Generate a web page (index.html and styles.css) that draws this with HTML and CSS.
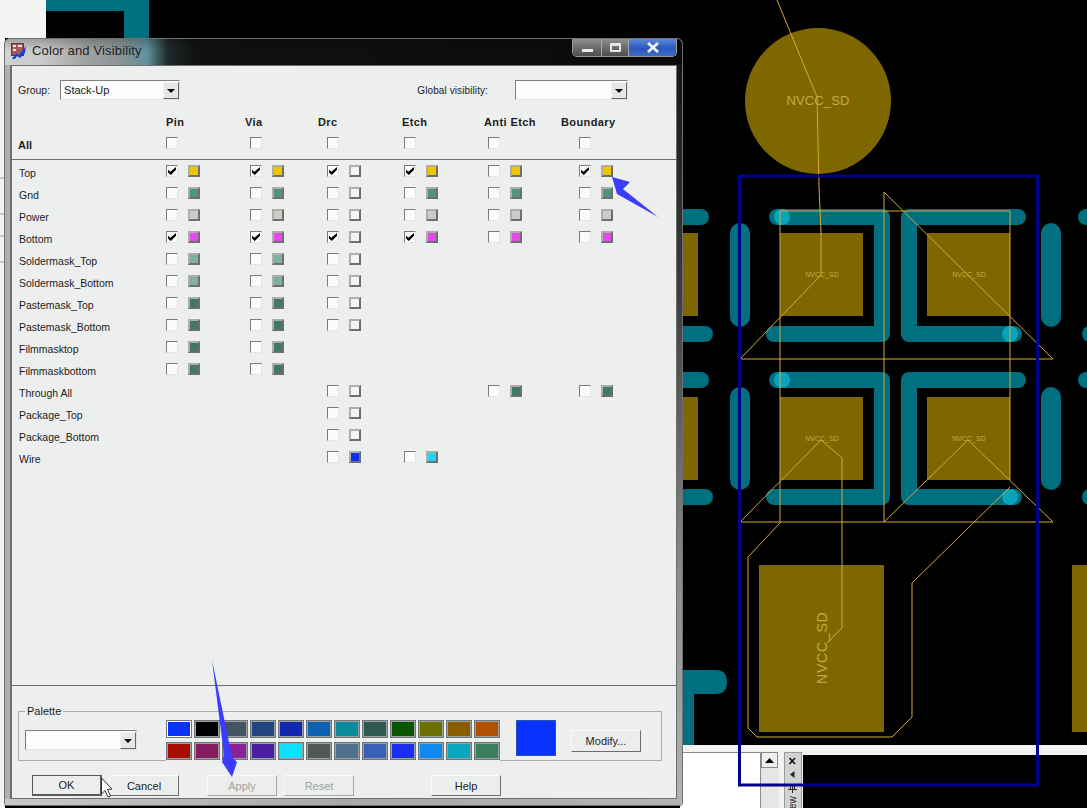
FILE: index.html
```html
<!DOCTYPE html>
<html lang="en">

<head>
    <title>Color and Visibility</title>
    <link rel="stylesheet" href="styles.css">
</head>

<body>
    <!-- layout editor behind the dialog -->
    <svg class="board" width="1087" height="808" viewBox="0 0 1087 808">
        <rect x="0" y="0" width="46" height="38" fill="#f4f4f4" />
        <rect x="0" y="38" width="5" height="770" fill="#f4f4f4" />
        <path d="M0,178 H5 M0,214 H5 M0,236 H5 M0,262 H5" stroke="#a0a0a0" />
        <path class="corner" d="M46,0 H149 V38 H124 V11 H46 Z" />

        <circle class="pad" cx="818" cy="101" r="73" />

        <g class="pad">
            <rect x="680" y="233" width="18" height="83" />
            <rect x="680" y="397" width="18" height="83" />
            <rect x="780" y="233" width="83" height="83" />
            <rect x="927" y="233" width="83" height="83" />
            <rect x="780" y="397" width="83" height="83" />
            <rect x="927" y="397" width="83" height="83" />
            <rect x="759" y="565" width="125" height="167" />
            <rect x="1072" y="565" width="15" height="167" />
        </g>

        <g class="trace">
            <path d="M777,217 H882 V334 H774" />
            <path d="M1018,217 H909 V334 H1014" />
            <path d="M777,380 H882 V497 H774" />
            <path d="M1018,380 H909 V497 H1014" />
            <path d="M680,217 H701" />
            <path d="M680,334 H705" />
            <path d="M680,380 H701" />
            <path d="M680,497 H705" />
            <path d="M1086,217 H1095" />
            <path d="M1090,334 H1095" />
            <path d="M1086,380 H1095" />
            <path d="M1090,497 H1095" />
        </g>
        <g class="pill">
            <rect x="730" y="223" width="20" height="104" rx="10" />
            <rect x="730" y="387" width="20" height="103" rx="10" />
            <rect x="1041" y="223" width="20" height="104" rx="10" />
            <rect x="1041" y="387" width="20" height="103" rx="10" />
        </g>
        <path class="corner" d="M680,745 V670 H716 Q727,670 727,682 Q727,694 716,694 H694 V745 Z" />

        <g class="via">
            <circle cx="782" cy="217" r="8" />
            <circle cx="1010" cy="334" r="8" />
            <circle cx="782" cy="380" r="8" />
            <circle cx="1010" cy="497" r="8" />
        </g>

        <g class="wire">
            <path d="M777,0 L817,97 L819,187 L821,232 V275 L740,359 H1053 L884,192 V522" />
            <path d="M780,523 V211 H1010 V480" />
            <path d="M740,522 H1053 L968,440 L884,522" />
            <path d="M740,522 L821,440 L842,458 V628 L827,643" />
            <path d="M1010,487 L912,583 V717 L892,737 H757 L748,728 V557 L780,523" />
        </g>

        <g class="pin-label">
            <text class="label-big" x="818" y="105" text-anchor="middle">NVCC_SD</text>
            <text class="label-small" x="822" y="277" text-anchor="middle">NVCC_SD</text>
            <text class="label-small" x="969" y="277" text-anchor="middle">NVCC_SD</text>
            <text class="label-small" x="822" y="441" text-anchor="middle">NVCC_SD</text>
            <text class="label-small" x="969" y="441" text-anchor="middle">NVCC_SD</text>
            <text class="label-rot" transform="translate(827,684) rotate(-90)">NVCC_SD</text>
        </g>

        <!-- docked panels along the bottom -->
        <rect x="680" y="745" width="407" height="63" fill="#f2f2f2" />
        <rect x="680" y="752" width="80" height="56" fill="#ffffff" />
        <path d="M680,752.5 H760.5 V808" fill="none" stroke="#8a8a8a" />
        <rect class="hatch" x="761" y="768" width="18" height="40" />
        <rect x="761.500" y="752.500" width="16" height="15" fill="#efefef" stroke="#8a8a8a" />
        <path d="M765,763 L769.500,758 L774,763 Z" fill="#000" />
        <rect x="784.500" y="752.500" width="17" height="56" fill="#d2d4d4" stroke="#9a9a9a" />
        <path d="M789.500,758 L795,764 M795,758 L789.500,764" stroke="#111" stroke-width="1.600" />
        <path d="M794.500,771 L790,774.500 L794.500,778 Z" fill="#222" />
        <path d="M788,789.500 H797 M792.500,786 V793 M790.500,786 V789 M794.500,786 V789" stroke="#222" fill="none" />
        <text class="dock-label" transform="translate(796,809) rotate(-90)">ew</text>
        <rect x="803" y="755" width="284" height="53" fill="#000" />

        <rect class="select-box" x="739.500" y="176" width="298" height="609" />
    </svg>

    <div class="dialog">
        <div class="titlebar">
            <svg class="app-icon" width="16" height="16" viewBox="0 0 16 16">
                <rect x="0.500" y="0.500" width="12" height="12" fill="#a85a5a" stroke="#6a3030" />
                <path d="M2,2 H5 V4 H2 Z M7,2 H11 V4 H7 Z M2,6 H5 V8 H2 Z" fill="#efe6e0" />
                <path d="M1,16 L5,10 L8,12 L15,3 L14,10 L9,15 L6,13 L4,16 Z" fill="#1c3fd8" />
            </svg>
            <span class="title-text">Color and Visibility</span>
            <div class="caption-btns">
                <span class="cap-btn cap-min"><i></i></span>
                <span class="cap-btn cap-max"><i></i></span>
                <span class="cap-btn cap-close">
                    <svg width="14" height="11" viewBox="0 0 14 11">
                        <path d="M2,1 L12,10 M12,1 L2,10" stroke="#eef2f8" stroke-width="2.800" />
                    </svg>
                </span>
            </div>
        </div>

        <div class="client">
            <div class="top-row">
                <div class="field">
                    <span class="field-label">Group:</span>
                    <div class="combo combo-group"><span>Stack-Up</span><b class="drop"></b></div>
                </div>
                <div class="field">
                    <span class="field-label">Global visibility:</span>
                    <div class="combo combo-global"><span></span><b class="drop"></b></div>
                </div>
            </div>

            <div class="grid heads">
                <span></span>
                <span>Pin</span><span>Via</span><span>Drc</span><span>Etch</span><span>Anti Etch</span><span>Boundary</span>
            </div>
            <div class="grid all-row">
                <span class="all-label">All</span>
                <span class="chk"></span><span class="chk"></span><span class="chk"></span><span class="chk"></span><span class="chk"></span><span class="chk"></span>
            </div>

            <div class="layers">
                <div class="grid row">
                    <span class="name">Top</span>
                    <div class="cell"><span class="chk on"></span><span class="sw yellow"></span></div>
                    <div class="cell"><span class="chk on"></span><span class="sw yellow"></span></div>
                    <div class="cell"><span class="chk on"></span><span class="sw white"></span></div>
                    <div class="cell"><span class="chk on"></span><span class="sw yellow"></span></div>
                    <div class="cell"><span class="chk"></span><span class="sw yellow"></span></div>
                    <div class="cell"><span class="chk on"></span><span class="sw yellow"></span></div>
                </div>
                <div class="grid row">
                    <span class="name">Gnd</span>
                    <div class="cell"><span class="chk"></span><span class="sw green"></span></div>
                    <div class="cell"><span class="chk"></span><span class="sw green"></span></div>
                    <div class="cell"><span class="chk"></span><span class="sw white"></span></div>
                    <div class="cell"><span class="chk"></span><span class="sw green"></span></div>
                    <div class="cell"><span class="chk"></span><span class="sw green"></span></div>
                    <div class="cell"><span class="chk"></span><span class="sw green"></span></div>
                </div>
                <div class="grid row">
                    <span class="name">Power</span>
                    <div class="cell"><span class="chk"></span><span class="sw silver"></span></div>
                    <div class="cell"><span class="chk"></span><span class="sw silver"></span></div>
                    <div class="cell"><span class="chk"></span><span class="sw white"></span></div>
                    <div class="cell"><span class="chk"></span><span class="sw silver"></span></div>
                    <div class="cell"><span class="chk"></span><span class="sw silver"></span></div>
                    <div class="cell"><span class="chk"></span><span class="sw silver"></span></div>
                </div>
                <div class="grid row">
                    <span class="name">Bottom</span>
                    <div class="cell"><span class="chk on"></span><span class="sw pink"></span></div>
                    <div class="cell"><span class="chk on"></span><span class="sw pink"></span></div>
                    <div class="cell"><span class="chk on"></span><span class="sw white"></span></div>
                    <div class="cell"><span class="chk on"></span><span class="sw pink"></span></div>
                    <div class="cell"><span class="chk"></span><span class="sw pink"></span></div>
                    <div class="cell"><span class="chk"></span><span class="sw pink"></span></div>
                </div>
                <div class="grid row">
                    <span class="name">Soldermask_Top</span>
                    <div class="cell"><span class="chk"></span><span class="sw sage"></span></div>
                    <div class="cell"><span class="chk"></span><span class="sw sage"></span></div>
                    <div class="cell"><span class="chk"></span><span class="sw white"></span></div>
                </div>
                <div class="grid row">
                    <span class="name">Soldermask_Bottom</span>
                    <div class="cell"><span class="chk"></span><span class="sw sage"></span></div>
                    <div class="cell"><span class="chk"></span><span class="sw sage"></span></div>
                    <div class="cell"><span class="chk"></span><span class="sw white"></span></div>
                </div>
                <div class="grid row">
                    <span class="name">Pastemask_Top</span>
                    <div class="cell"><span class="chk"></span><span class="sw pine"></span></div>
                    <div class="cell"><span class="chk"></span><span class="sw pine"></span></div>
                    <div class="cell"><span class="chk"></span><span class="sw white"></span></div>
                </div>
                <div class="grid row">
                    <span class="name">Pastemask_Bottom</span>
                    <div class="cell"><span class="chk"></span><span class="sw pine"></span></div>
                    <div class="cell"><span class="chk"></span><span class="sw pine"></span></div>
                    <div class="cell"><span class="chk"></span><span class="sw white"></span></div>
                </div>
                <div class="grid row">
                    <span class="name">Filmmasktop</span>
                    <div class="cell"><span class="chk"></span><span class="sw pine"></span></div>
                    <div class="cell"><span class="chk"></span><span class="sw pine"></span></div>
                </div>
                <div class="grid row">
                    <span class="name">Filmmaskbottom</span>
                    <div class="cell"><span class="chk"></span><span class="sw pine"></span></div>
                    <div class="cell"><span class="chk"></span><span class="sw pine"></span></div>
                </div>
                <div class="grid row">
                    <span class="name">Through All</span>
                    <div></div>
                    <div></div>
                    <div class="cell"><span class="chk"></span><span class="sw white"></span></div>
                    <div></div>
                    <div class="cell"><span class="chk"></span><span class="sw pine"></span></div>
                    <div class="cell"><span class="chk"></span><span class="sw pine"></span></div>
                </div>
                <div class="grid row">
                    <span class="name">Package_Top</span>
                    <div></div>
                    <div></div>
                    <div class="cell"><span class="chk"></span><span class="sw white"></span></div>
                </div>
                <div class="grid row">
                    <span class="name">Package_Bottom</span>
                    <div></div>
                    <div></div>
                    <div class="cell"><span class="chk"></span><span class="sw white"></span></div>
                </div>
                <div class="grid row">
                    <span class="name">Wire</span>
                    <div></div>
                    <div></div>
                    <div class="cell"><span class="chk"></span><span class="sw blue"></span></div>
                    <div class="cell"><span class="chk"></span><span class="sw cyan"></span></div>
                </div>
            </div>

            <div class="footer">
                <fieldset class="palette">
                    <legend>Palette</legend>
                    <div class="combo combo-palette"><span></span><b class="drop"></b></div>
                    <div class="colors">
                        <span class="color sel c1"></span><span class="color c2"></span><span class="color c3"></span><span class="color c4"></span><span class="color c5"></span><span class="color c6"></span><span class="color c7"></span><span class="color c8"></span><span class="color c9"></span><span class="color c10"></span><span class="color c11"></span><span class="color c12"></span>
                        <span class="color c13"></span><span class="color c14"></span><span class="color c15"></span><span class="color c16"></span><span class="color c17"></span><span class="color c18"></span><span class="color c19"></span><span class="color c20"></span><span class="color c21"></span><span class="color c22"></span><span class="color c23"></span><span class="color c24"></span>
                    </div>
                    <div class="current"></div>
                    <button class="btn btn-modify">Modify...</button>
                </fieldset>
                <div class="actions">
                    <button class="btn btn-default">OK</button>
                    <button class="btn">Cancel</button>
                    <button class="btn btn-off btn-apply">Apply</button>
                    <button class="btn btn-off">Reset</button>
                    <button class="btn btn-help">Help</button>
                </div>
            </div>
        </div>
    </div>

    <!-- annotations and pointer on top of everything -->
    <svg class="overlay" width="1087" height="808" viewBox="0 0 1087 808">
        <path class="arrow" d="M612,177 L630,182 L623,189 L658,217 L617,194 Z" />
        <path class="arrow" d="M212,660 L232,757 L237,762 L232,777 L222,762 L224,755 Z" />
        <path d="M101.500,778 V794 L105,790.500 L108,797 L110.500,796 L107.500,789.500 L112,789 Z" fill="#fff" stroke="#333" />
    </svg>
</body>

</html>
```

FILE: styles.css
```css
body {
    margin: 0;
    width: 1087px;
    height: 808px;
    overflow: hidden;
    background-color: #000;
    font-family: "Liberation Sans", Arial, sans-serif;
    font-size: 11px;
    color: #1c1c1c;
}

/* board */
.board,
.overlay {
    position: absolute;
    left: 0;
    top: 0;
}

.overlay {
    pointer-events: none;
}

.pad {
    fill: #7f6700;
}

.trace {
    fill: none;
    stroke: #006f80;
    stroke-width: 16;
    stroke-linecap: round;
    stroke-linejoin: round;
}

.pill,
.corner {
    fill: #006f80;
}

.via {
    fill: #08a4bb;
}

.wire {
    fill: none;
    stroke: #d4aa3a;
    stroke-width: 1;
}

.pin-label {
    fill: #c4aa40;
    font-family: "Liberation Sans", Arial, sans-serif;
}

.label-big {
    font-size: 13px;
    letter-spacing: 0.1px;
}

.label-rot {
    font-size: 14px;
    letter-spacing: 0.8px;
}

.label-small {
    font-size: 7px;
}

.dock-label {
    font-size: 10px;
    fill: #222;
}

.hatch {
    fill: #e6e6e6;
}

.select-box {
    fill: none;
    stroke: #00008b;
    stroke-width: 3;
}

.arrow {
    fill: #3a3cff;
}

/* dialog frame */
.dialog {
    position: absolute;
    left: 4px;
    top: 38px;
    width: 679px;
    height: 768px;
    box-sizing: border-box;
    padding: 0 5px 6px 5px;
    display: flex;
    flex-direction: column;
    border: 1px solid #707070;
    border-radius: 6px 6px 3px 3px;
    background-color: #aeb0b0;
}

.dialog::after {
    content: "";
    position: absolute;
    right: 0;
    top: 26px;
    bottom: 0;
    width: 5px;
    background: linear-gradient(180deg, #161616 0, #3a3d3d 30%, #8a8e8e 70%, #b2b4b4 100%);
}

.dialog::before {
    content: "";
    position: absolute;
    left: 0;
    right: 0;
    bottom: 0;
    height: 6px;
    background: linear-gradient(90deg, #c8c8c8, #a8a8a8 50%, #b4b4b4);
}

.titlebar {
    box-sizing: border-box;
    flex: none;
    height: 26px;
    margin: 0 -5px;
    padding: 0 6px 3px;
    display: flex;
    align-items: center;
    border-radius: 5px 5px 0 0;
    background:
        linear-gradient(180deg, rgba(0, 0, 0, 0.22), rgba(0, 0, 0, 0) 45%),
        linear-gradient(90deg, #d2d4d4 0, #c6c8c8 6%, #a0a2a2 12%, #8c9496 17%, #5f929c 21%, #1f2a2c 24%, #111 28%, #0a0a0a 100%);
}

.app-icon {
    margin-right: 5px;
}

.title-text {
    font-size: 13px;
    letter-spacing: 0.15px;
    color: #222;
}

.caption-btns {
    margin-left: auto;
    align-self: flex-start;
    margin-right: -1px;
    display: flex;
    height: 17px;
    border: 1px solid #9a9a9a;
    border-top: none;
    border-radius: 0 0 5px 5px;
    overflow: hidden;
}

.cap-btn {
    display: flex;
    align-items: center;
    justify-content: center;
    height: 17px;
    border-left: 1px solid #a8a8a8;
    background: linear-gradient(180deg, #8e9092, #6a6c6e 50%, #4c4e50);
}

.cap-min {
    width: 28px;
    border-left: none;
}

.cap-min i {
    width: 11px;
    height: 3px;
    margin-top: 6px;
    background-color: #ececec;
}

.cap-max {
    width: 26px;
}

.cap-max i {
    width: 7px;
    height: 4px;
    border: 2px solid #e6e6e6;
    border-top-width: 3px;
}

.cap-close {
    width: 47px;
    background: linear-gradient(180deg, #5f8ad8, #2a58bc 55%, #3e6cc8);
}

/* client area */
.client {
    flex: 1;
    min-height: 0;
    display: flex;
    flex-direction: column;
    border: 1px solid #6e6e6e;
    border-left-width: 2px;
    background-color: #edefee;
}

.top-row {
    box-sizing: border-box;
    flex: none;
    height: 36px;
    padding: 14px 0 0 6px;
    display: flex;
    justify-content: space-between;
}

.field {
    display: flex;
    align-items: center;
    height: 20px;
}

.field + .field {
    margin-right: 48px;
}

.field-label {
    font-size: 10.500px;
    margin-right: 10px;
}

.field + .field .field-label {
    margin-right: 27px;
    font-size: 10px;
    letter-spacing: 0.1px;
}

.combo {
    box-sizing: border-box;
    height: 20px;
    display: flex;
    align-items: center;
    justify-content: space-between;
    padding-left: 3px;
    border: 1px solid;
    border-color: #7e7e7e #e2e2e2 #e2e2e2 #7e7e7e;
    background-color: #fbfcfc;
}

.combo span {
    font-size: 11px;
}

.combo-group {
    width: 120px;
}

.combo-global {
    width: 113px;
}

.combo-palette {
    width: 112px;
}

.drop {
    position: relative;
    width: 16px;
    height: 17px;
    box-sizing: border-box;
    border: 1px solid;
    border-color: #f4f4f4 #666 #666 #f4f4f4;
    background-color: #e6e8e7;
}

.drop::after {
    content: "";
    position: absolute;
    left: 3px;
    top: 6px;
    border: 4px solid transparent;
    border-top: 4px solid #000;
    border-bottom: none;
}

/* layer table */
.grid {
    display: grid;
    grid-template-columns: 147px 84px 77px 77px 84px 91px 1fr;
    padding-left: 7px;
}

.heads {
    flex: none;
    grid-template-columns: 147px 79px 73px 84px 82px 77px 1fr;
    margin-top: 12px;
    height: 16px;
    align-items: center;
    font-weight: bold;
    font-size: 11px;
    letter-spacing: 0.4px;
}

.all-row {
    flex: none;
    height: 16px;
    margin-top: 7px;
    margin-bottom: 6px;
    align-items: start;
}

.all-label {
    font-size: 11px;
    font-weight: bold;
    line-height: 16px;
    margin-left: -1px;
}

.layers {
    flex: none;
    height: 527px;
    border-top: 1px solid #6e6e6e;
    border-bottom: 1px solid #6e6e6e;
    box-sizing: border-box;
}

.row {
    height: 22px;
    align-items: center;
}

.name {
    font-size: 10.500px;
    margin-top: 3px;
}

.cell {
    display: flex;
    gap: 10px;
}

.chk {
    position: relative;
    display: block;
    box-sizing: border-box;
    width: 12px;
    height: 12px;
    border: 1px solid;
    border-color: #7b7b7b #e4e4e4 #e4e4e4 #7b7b7b;
    background-color: #fafbfa;
}

.on::after {
    content: "";
    position: absolute;
    left: 1px;
    top: 1px;
    width: 8px;
    height: 8px;
    background-color: #000;
    clip-path: polygon(0 35%, 30% 60%, 100% 0, 100% 35%, 35% 100%, 0 70%);
}

.sw {
    display: block;
    box-sizing: border-box;
    width: 12px;
    height: 12px;
    border: 2px solid;
    border-color: #aeaea6 #6e6e6e #6e6e6e #aeaea6;
}

.yellow { background-color: #eec600; }
.green { background-color: #4f9480; }
.silver { background-color: #c9cecb; }
.pink { background-color: #e44ae8; }
.sage { background-color: #7fb0a0; }
.pine { background-color: #3f7868; }
.white { background-color: #f3f5f4; }
.blue { background-color: #0a32f0; }
.cyan { background-color: #20d8f4; }

/* palette and buttons */
.footer {
    flex: 1;
    padding: 19px 15px 0 6px;
}

.palette {
    position: relative;
    box-sizing: border-box;
    height: 56px;
    margin: 0;
    padding: 0 20px 0 6px;
    display: flex;
    align-items: flex-start;
    border: 1px solid #acacac;
}

.palette legend {
    margin-left: 0;
    padding: 0 2px;
    font-size: 11px;
}

.combo-palette {
    margin-top: 13px;
    flex: none;
}

.colors {
    margin: 3px 0 0 29px;
    padding-bottom: 1px;
    display: grid;
    grid-template-columns: repeat(12, 26px);
    grid-auto-rows: 18px;
    column-gap: 2px;
    row-gap: 4px;
    flex: none;
    background-color: #edefee;
}

.color {
    display: block;
    border: 2px solid;
    border-color: #9aa09e;
    outline: 1px solid #70767a;
    outline-offset: -1px;
}

.sel {
    border-color: #fff;
}

.c1 { background-color: #0a32ff; }
.c2 { background-color: #000; }
.c3 { background-color: #435560; }
.c4 { background-color: #23457f; }
.c5 { background-color: #1228b0; }
.c6 { background-color: #0a62b0; }
.c7 { background-color: #0a8a9a; }
.c8 { background-color: #2f5a50; }
.c9 { background-color: #0a5500; }
.c10 { background-color: #6a6f00; }
.c11 { background-color: #8a5c00; }
.c12 { background-color: #b05000; }
.c13 { background-color: #a80c00; }
.c14 { background-color: #851d60; }
.c15 { background-color: #8a2298; }
.c16 { background-color: #4a1ea0; }
.c17 { background-color: #10e0ff; }
.c18 { background-color: #505858; }
.c19 { background-color: #507090; }
.c20 { background-color: #3a60b8; }
.c21 { background-color: #1a30f0; }
.c22 { background-color: #1088f0; }
.c23 { background-color: #08a8c0; }
.c24 { background-color: #3a8060; }

.current {
    flex: none;
    width: 40px;
    height: 36px;
    margin: 3px 0 0 16px;
    background-color: #0a32ff;
    border: 1px solid #2a50b0;
    box-sizing: border-box;
}

.btn {
    box-sizing: border-box;
    width: 70px;
    height: 21px;
    padding: 0;
    border: 1px solid;
    border-color: #fafafa #6e6e6e #6e6e6e #fafafa;
    background-color: #eceeed;
    font-family: "Liberation Sans", Arial, sans-serif;
    font-size: 11px;
    color: #1c1c1c;
}

.btn-modify {
    flex: none;
    margin: 13px 0 0 15px;
    height: 22px;
}

.actions {
    margin: 14px 0 0 14px;
    display: flex;
    gap: 7px;
}

.btn-default {
    border: 1px solid #5a5a5a;
    border-bottom-width: 2px;
    border-right-width: 2px;
}

.btn-off {
    color: #9fa2a1;
    border-color: #fafafa #a8a8a8 #a8a8a8 #fafafa;
}

.btn-apply {
    margin-left: 21px;
}

.btn-help {
    margin-left: 70px;
}
```
